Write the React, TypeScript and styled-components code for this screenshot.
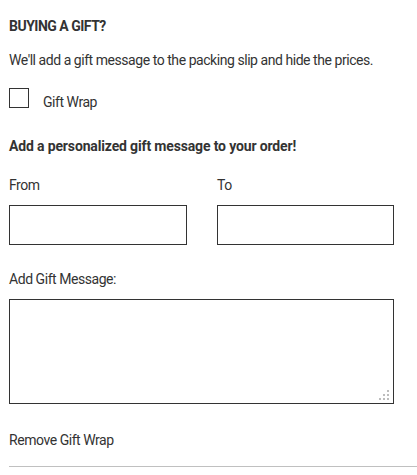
import styled, { createGlobalStyle } from "styled-components"

const Global = createGlobalStyle`
body{
    margin: 0;
    background: #fff;
    font-family: Roboto, "Liberation Sans", sans-serif;
    color: #333;
}
*{ box-sizing: border-box; }
`

const App = () => {
    return (
        <>
            <Global />
            <Wrap>
                <Title>BUYING A GIFT?</Title>
                <Note>We'll add a gift message to the packing slip and hide the prices.</Note>
                <Check>
                    <input type="checkbox" />
                    <span>Gift Wrap</span>
                </Check>
                <Sub>Add a personalized gift message to your order!</Sub>
                <Pair>
                    <Field>
                        <Label>From</Label>
                        <Box type="text" />
                    </Field>
                    <Field>
                        <Label>To</Label>
                        <Box type="text" />
                    </Field>
                </Pair>
                <Label>Add Gift Message:</Label>
                <AreaWrap>
                    <Area />
                    <Grip>
                        <i style={{ right: 5, bottom: 12 }} />
                        <i style={{ right: 9, bottom: 8 }} />
                        <i style={{ right: 5, bottom: 8 }} />
                        <i style={{ right: 13, bottom: 4 }} />
                        <i style={{ right: 9, bottom: 4 }} />
                        <i style={{ right: 5, bottom: 4 }} />
                    </Grip>
                </AreaWrap>
                <Remove>Remove Gift Wrap</Remove>
            </Wrap>
            <Rule />
        </>
    )
}
export default App

const Wrap = styled.div`
padding: 18px 23px 0 9px;
display: flex;
flex-direction: column;
font-size: 14px;
letter-spacing: -0.45px;
`
const Title = styled.h2`
margin: 0;
font-size: 14px;
font-weight: 700;
line-height: 17px;
letter-spacing: -0.5px;
`
const Note = styled.p`
margin: 17px 0 0;
line-height: 17px;
`
const Check = styled.label`
display: flex;
align-items: center;
margin-top: 16px;
input{
    appearance: none;
    margin: 0;
    width: 20px;
    height: 20px;
    border: 1px solid #333;
    background: #fff;
}
span{
    margin-left: 14px;
    margin-top: 9px;
}
`
const Sub = styled.h3`
margin: 28px 0 0;
font-size: 14px;
font-weight: 700;
line-height: 17px;
letter-spacing: -0.15px;
`
const Pair = styled.div`
display: grid;
grid-template-columns: 178px 177px;
column-gap: 30px;
margin-top: 22px;
`
const Field = styled.div`
display: flex;
flex-direction: column;
`
const Label = styled.div`
line-height: 17px;
margin-bottom: 11px;
`
const Box = styled.input`
height: 40px;
width: 100%;
border: 1px solid #333;
margin-bottom: 26px;
font: inherit;
`
const AreaWrap = styled.div`
position: relative;
display: flex;
`
const Area = styled.textarea`
flex: 1;
height: 105px;
border: 1px solid #333;
resize: none;
font: inherit;
`
const Grip = styled.div`
position: absolute;
right: 0;
bottom: 0;
width: 16px;
height: 16px;
i{
    position: absolute;
    width: 2px;
    height: 2px;
    background: #bdbdbd;
}
`
const Remove = styled.div`
margin-top: 28px;
line-height: 17px;
`
const Rule = styled.hr`
margin: 17px 0 0 9px;
border: 0;
border-top: 1px solid #c0c0c0;
`
